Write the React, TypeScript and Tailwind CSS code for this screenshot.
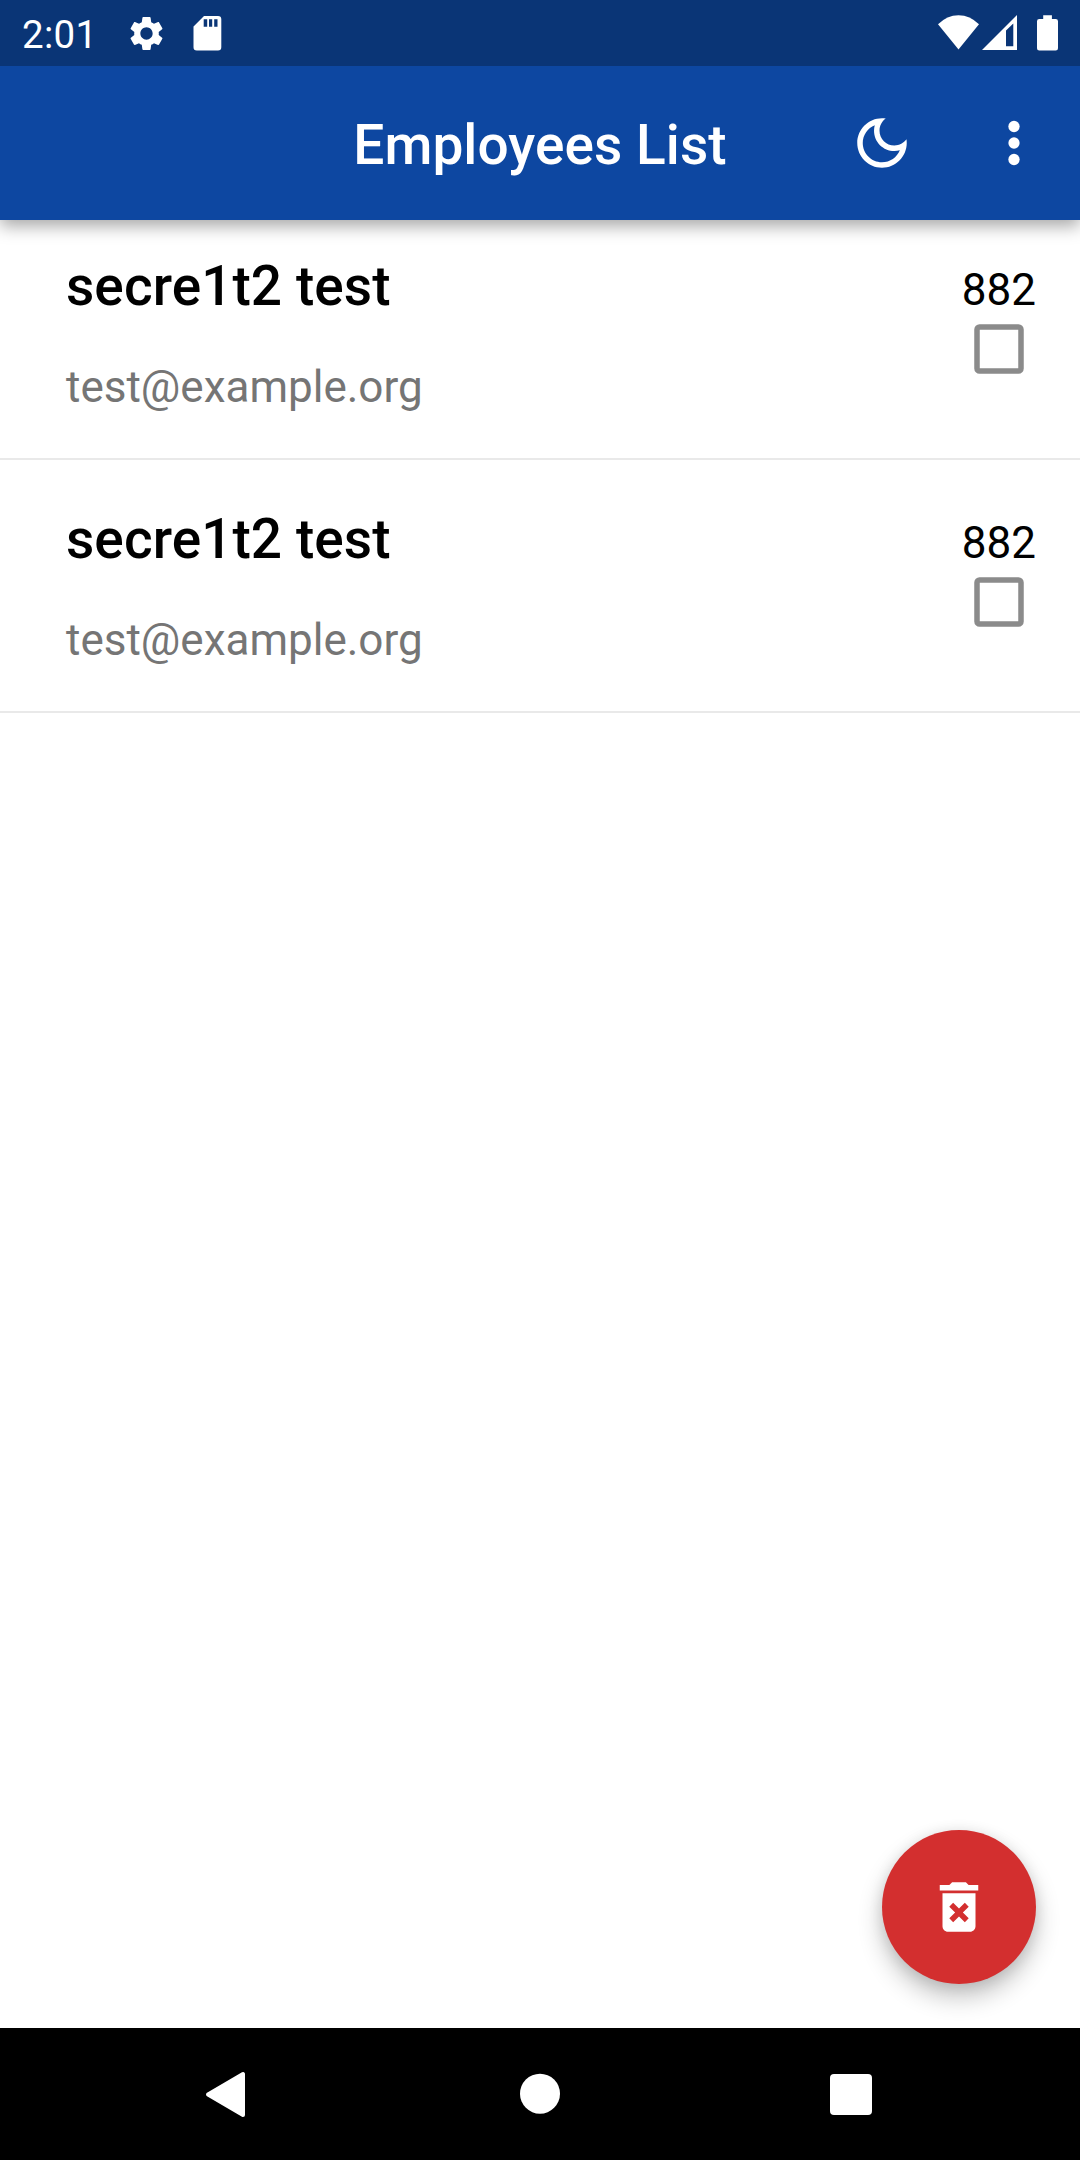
const employees = [
  { name: 'secre1t2 test', email: 'test@example.org', code: '882' },
  { name: 'secre1t2 test', email: 'test@example.org', code: '882' },
];

function StatusBar() {
  return (
    <div className="relative z-20 flex h-[66px] items-center justify-between bg-[#0a3576] text-white">
      <div className="flex h-full items-center pl-[22px]">
        <span className="w-[104px] pt-[3px] text-[38.5px] leading-[66px] tracking-[0.3px]">2:01</span>
        <svg className="h-[41px] w-[41px] fill-current" viewBox="0 0 24 24">
          <path d="M19.14 12.94c.04-.3.06-.61.06-.94 0-.32-.02-.64-.07-.94l2.03-1.58c.18-.14.23-.41.12-.61l-1.92-3.32c-.12-.22-.37-.29-.59-.22l-2.39.96c-.5-.38-1.03-.7-1.62-.94l-.36-2.54c-.04-.24-.24-.41-.48-.41h-3.84c-.24 0-.43.17-.47.41l-.36 2.54c-.59.24-1.13.57-1.62.94l-2.39-.96c-.22-.08-.47 0-.59.22L2.74 8.87c-.12.21-.08.47.12.61l2.03 1.58c-.05.3-.09.63-.09.94s.02.64.07.94l-2.03 1.58c-.18.14-.23.41-.12.61l1.92 3.32c.12.22.37.29.59.22l2.39-.96c.5.38 1.03.7 1.62.94l.36 2.54c.05.24.24.41.48.41h3.84c.24 0 .44-.17.47-.41l.36-2.54c.59-.24 1.13-.56 1.62-.94l2.39.96c.22.08.47 0 .59-.22l1.92-3.32c.12-.22.07-.47-.12-.61l-2.01-1.58zM12 15.6c-1.98 0-3.6-1.62-3.6-3.6s1.62-3.6 3.6-3.6 3.6 1.62 3.6 3.6-1.62 3.6-3.6 3.6z" />
        </svg>
        <svg className="ml-[26px] h-[66px] w-[30px] fill-current" viewBox="193 0 30 66">
          <path
            fillRule="evenodd"
            d="M204 16H218Q221.300 16 221.300 19.300V47.200Q221.300 50.500 218 50.500H196.800Q193.500 50.500 193.500 47.200V26.500ZM203.700 19.300V26.700H207.200V19.300ZM209 19.300V26.700H212.200V19.300ZM214.200 19.300V26.700H217.500V19.300Z"
          />
        </svg>
      </div>
      <svg className="h-[66px] w-[150px] fill-current" viewBox="930 0 150 66">
        <path d="M958.500 49.500L938 24.300Q947 15.200 958.500 15.200T979 24.300z" />
        <path fillRule="evenodd" d="M1017 15v35h-35zM1006 30.500v15.700h7.300V23.500z" />
        <path d="M1043.200 15.300h8.700v3.700h3.800q2.300 0 2.300 2.300v27q0 2.300-2.300 2.300h-16.400q-2.300 0-2.300-2.300v-27q0-2.300 2.300-2.300h3.900z" />
      </svg>
    </div>
  );
}

function AppBar() {
  return (
    <header className="relative z-10 grid h-[154px] grid-cols-[264px_1fr_264px] items-center bg-[#0d47a1] text-white shadow-[0_6px_16px_0_rgba(0,0,0,0.35)]">
      <h1 className="col-start-2 pt-[4px] text-center text-[55px] leading-[64px] font-medium tracking-[0.06px]">
        Employees List
      </h1>
      <div className="flex">
        <button className="flex h-[132px] w-[132px] items-center justify-center" aria-label="Dark mode">
          <svg className="h-[66px] w-[66px] fill-current" viewBox="0 0 24 24">
            <path d="M9.370 5.510c-.18.64-.27 1.310-.27 1.990 0 4.080 3.320 7.400 7.400 7.400.68 0 1.350-.09 1.990-.27C17.450 17.190 14.930 19 12 19c-3.860 0-7-3.140-7-7 0-2.930 1.810-5.450 4.370-6.490zM12 3c-4.970 0-9 4.030-9 9s4.030 9 9 9 9-4.030 9-9c0-.46-.04-.92-.1-1.360-.98 1.370-2.580 2.260-4.400 2.260-2.980 0-5.400-2.420-5.400-5.400 0-1.810.89-3.420 2.260-4.400C12.920 3.040 12.460 3 12 3z" />
          </svg>
        </button>
        <button className="flex h-[132px] w-[132px] items-center justify-center" aria-label="More options">
          <svg className="h-[66px] w-[66px] fill-current" viewBox="0 0 24 24">
            <circle cx="12" cy="6" r="2.050" />
            <circle cx="12" cy="12" r="2.050" />
            <circle cx="12" cy="18" r="2.050" />
          </svg>
        </button>
      </div>
    </header>
  );
}

function EmployeeRow({ name, email, code }: { name: string; email: string; code: string }) {
  return (
    <li className="flex h-[253px] justify-between border-b-2 border-[#e9e9e9] pr-[44px] pl-[66px]">
      <div className="pt-[47px]">
        <div className="text-[55px] leading-[64px] font-medium tracking-[0.06px] text-black">{name}</div>
        <div className="mt-[43px] text-[44px] leading-[52px] text-[#757575]">{email}</div>
      </div>
      <div className="flex flex-col items-center pt-[57px]">
        <span className="text-[44px] leading-[52px] text-black">{code}</span>
        <svg className="mt-[8px] h-[50px] w-[50px]" viewBox="0 0 50 50">
          <rect x="3" y="3" width="44" height="44" rx="2.500" fill="none" stroke="#8b8b8b" strokeWidth="5.500" />
        </svg>
      </div>
    </li>
  );
}

function NavigationBar() {
  return (
    <nav className="flex h-[132px] items-center bg-black pl-[205px]">
      <svg className="h-[46px] w-[41px]" viewBox="0 0 41 46">
        <path d="M3 23.500L38 3v41z" fill="white" stroke="white" strokeWidth="4" strokeLinejoin="round" />
      </svg>
      <svg className="ml-[274px] h-[42px] w-[41px]" viewBox="0 0 41 42">
        <circle cx="20" cy="20.700" r="20" fill="white" />
      </svg>
      <div className="mt-[1px] ml-[269px] h-[41.500px] w-[41.500px] rounded-[4px] bg-white" />
    </nav>
  );
}

export default function App() {
  return (
    <div className="flex h-[2160px] w-[1080px] flex-col overflow-hidden bg-white font-[Roboto,sans-serif]">
      <StatusBar />
      <AppBar />
      <main className="relative flex-1">
        <ul className="-mt-[13px]">
          {employees.map((employee, index) => (
            <EmployeeRow key={index} {...employee} />
          ))}
        </ul>
        <button
          aria-label="Delete selected"
          className="absolute right-[44px] bottom-[44px] flex h-[154px] w-[154px] items-center justify-center rounded-full bg-[#d32f2f] text-white shadow-[0_13px_24px_0_rgba(0,0,0,0.24),0_2px_14px_0_rgba(0,0,0,0.10)]"
        >
          <svg className="h-[66px] w-[66px] fill-current" viewBox="0 0 24 24">
            <path d="M6 19c0 1.100.9 2 2 2h8c1.100 0 2-.9 2-2V7H6v12zm2.460-7.120l1.410-1.410L12 12.590l2.120-2.120 1.410 1.410L13.410 14l2.120 2.120-1.410 1.410L12 15.410l-2.120 2.120-1.410-1.410L10.590 14l-2.130-2.120zM15.500 4l-1-1h-5l-1 1H5v2h14V4z" />
          </svg>
        </button>
      </main>
      <NavigationBar />
    </div>
  );
}
